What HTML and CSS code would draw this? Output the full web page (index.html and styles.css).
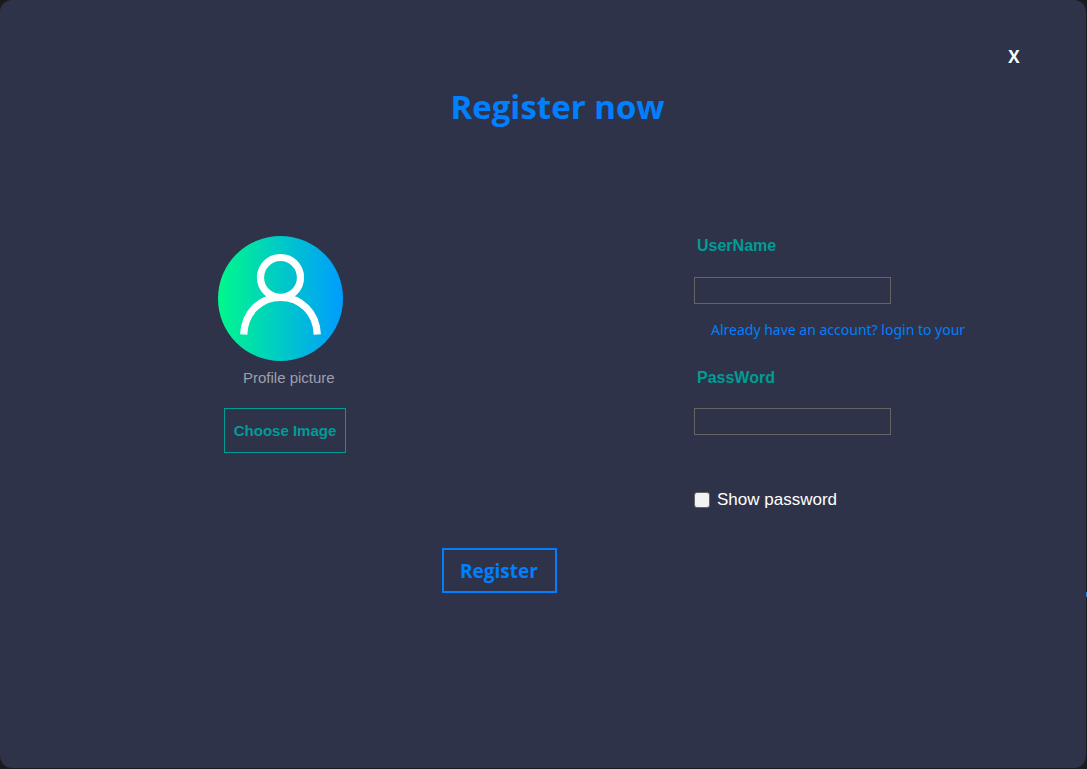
FILE: index.html
```html
<!DOCTYPE html>
<html lang="en">
<head>
<meta charset="utf-8">
<meta name="viewport" content="width=device-width, initial-scale=1">
<title>Register now</title>
<link rel="stylesheet" href="styles.css">
</head>
<body>
<main class="window">
  <header class="topbar">
    <button class="close" type="button">X</button>
  </header>
  <h1 class="title">Register now</h1>
  <form class="form">
    <div class="columns">
      <section class="profile">
        <svg class="avatar" viewBox="0 0 125 125" aria-hidden="true">
          <defs>
            <linearGradient id="avatar-fill" x1="0" x2="1" y1="0" y2="0">
              <stop offset="0" stop-color="#00f88c"/>
              <stop offset="1" stop-color="#009cff"/>
            </linearGradient>
          </defs>
          <circle cx="62.500" cy="62.500" r="62.500" fill="url(#avatar-fill)"/>
          <g fill="none" stroke="#fff" stroke-width="7.200">
            <circle cx="62.500" cy="41.500" r="20"/>
            <path d="M25.700 98.500C26.500 77 42 61.300 62.500 61.300S98.500 77 99.300 98.500"/>
          </g>
        </svg>
        <p class="caption">Profile picture</p>
        <button class="choose" type="button">Choose Image</button>
      </section>
      <section class="fields">
        <label class="label" for="username">UserName</label>
        <input class="box" id="username" type="text">
        <a class="login" href="#">Already have an account? login to your</a>
        <label class="label" for="password">PassWord</label>
        <input class="box" id="password" type="password">
        <label class="show"><input class="check" type="checkbox">Show password</label>
      </section>
    </div>
    <div class="actions">
      <button class="register" type="submit">Register</button>
    </div>
  </form>
</main>
<span class="edge"></span>
</body>
</html>
```

FILE: styles.css
```css
* { box-sizing: border-box; }

body {
  margin: 0;
  min-height: 100vh;
  display: flex;
  padding: 0 1px 1px 0;
  background: #1b1b1d;
  font-family: "Liberation Sans", Arial, sans-serif;
}

button {
  background: transparent;
  cursor: pointer;
}

.window {
  flex: 1;
  border-radius: 12px;
  background: #2e3349;
}

.topbar {
  display: flex;
  justify-content: flex-end;
  padding: 44px 60px 0 0;
}

.close {
  width: 24px;
  height: 26px;
  padding: 0;
  border: 0;
  color: #fff;
  font: bold 17px/26px "Open Sans", "Noto Sans", sans-serif;
}

.title {
  margin: 12px 0 0;
  padding-left: 29px;
  color: #007fff;
  font: bold 33px/50px "Open Sans", "Noto Sans", sans-serif;
  text-align: center;
}

.columns {
  display: grid;
  grid-template-columns: 476px 1fr;
  padding: 104px 0 0 218px;
}

.profile {
  display: flex;
  flex-direction: column;
  align-items: flex-start;
}

.avatar {
  width: 125px;
  height: 125px;
}

.caption {
  margin: 8px 0 0 25px;
  color: #9e9fae;
  font-size: 15px;
  line-height: 18px;
}

.choose {
  height: 45px;
  width: 122px;
  margin: 21px 0 0 6px;
  padding: 0;
  border: 1px solid #009c95;
  color: #009c95;
  font: bold 15px "Liberation Sans", Arial, sans-serif;
}

.fields {
  display: flex;
  flex-direction: column;
  align-items: flex-start;
}

.label {
  padding-left: 3px;
  color: #009c95;
  font-size: 16px;
  font-weight: bold;
  line-height: 20px;
}

.box {
  width: 197px;
  height: 27px;
  margin-top: 21px;
  padding: 0 6px;
  border: 1px solid #646464;
  background: transparent;
  color: #fff;
  font-size: 15px;
}

.label[for="password"] + .box { margin-top: 20px; }

.login {
  margin: 15px 0 27px 17px;
  color: #007fff;
  font: 14px/22px "Noto Sans", "Open Sans", sans-serif;
  text-decoration: none;
}

.show {
  display: flex;
  align-items: center;
  gap: 7px;
  margin-top: 55px;
  color: #fff;
  font-size: 17px;
  line-height: 20px;
}

.check {
  appearance: none;
  width: 16px;
  height: 16px;
  margin: 0;
  border: 1px solid #646464;
  border-radius: 3px;
  background: #f3f3f3;
}

.check:checked { background: #007fff; }

.actions {
  display: flex;
  justify-content: center;
  padding: 38px 88px 0 0;
}

.register {
  width: 115px;
  height: 45px;
  padding: 0;
  border: 2px solid #007fff;
  color: #007fff;
  font: bold 19px/42px "Open Sans", "Noto Sans", sans-serif;
}

.edge {
  position: absolute;
  top: 592px;
  right: 0;
  width: 1px;
  height: 5px;
  background: #3584d4;
}
```
